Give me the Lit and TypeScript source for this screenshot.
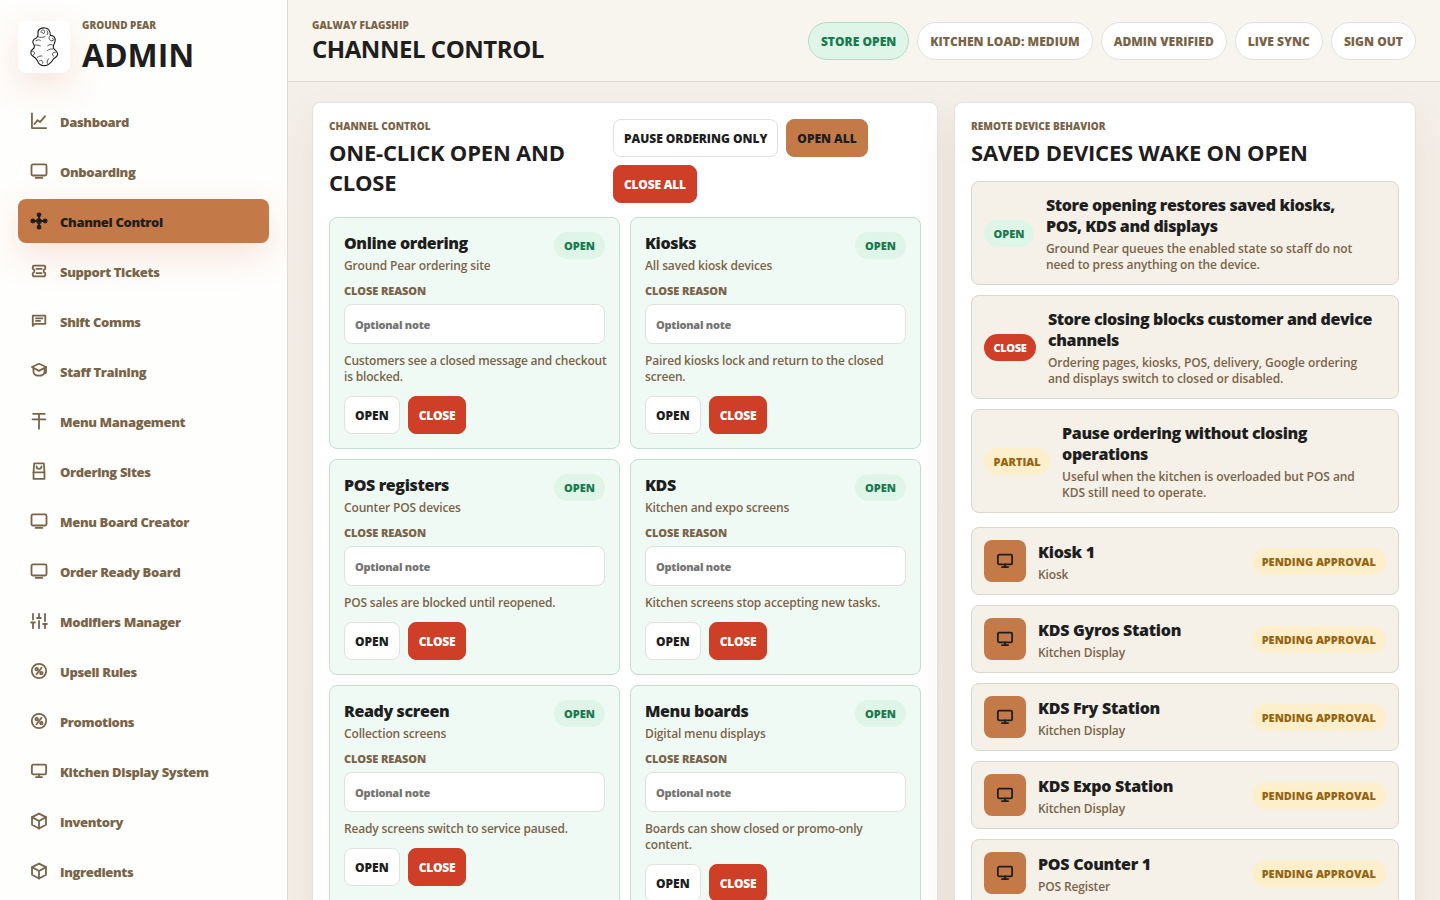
import { LitElement, html, css, svg } from "lit";
import { customElement, property } from "lit/decorators.js";

const ICONS: Record<string, unknown> = {
  chart: svg`<path d="M2.6 2v19.4h19"/><path d="M6 16l4.2-5.2 3.2 2.6L20 5.6"/>`,
  tv: svg`<rect x="2" y="3.2" width="20" height="14.8" rx="2"/><path d="M7.5 21.200h9"/>`,
  hub: svg`<g fill="currentColor"><circle cx="12" cy="12" r="2.6"/><circle cx="3.8" cy="12" r="2"/><circle cx="20.2" cy="12" r="2"/><circle cx="12" cy="3.8" r="2"/><circle cx="12" cy="20.2" r="2"/></g><path d="M4 12h16M12 4v16"/>`,
  ticket: svg`<path d="M5.5 4.8h13a1.8 1.8 0 0 1 1.8 1.8v2.6a2.900 2.900 0 0 0 0 5.600v2.6a1.8 1.8 0 0 1-1.8 1.8h-13a1.8 1.8 0 0 1-1.8-1.8v-2.600a2.900 2.900 0 0 0 0-5.600V6.600a1.8 1.8 0 0 1 1.800-1.800z"/><path d="M8.500 9.200h7M8.500 14.800h7"/>`,
  chat: svg`<path d="M3.700 18.500V4.700h16.700v11H6.500z"/><path d="M8 8.600h8.500M8 11.900h5.500"/>`,
  cap: svg`<path d="M12 2.400L2.500 6.600 12 11.800l9.500-5.200z"/><path d="M4.600 8.500v4.200c0 7.400 14.800 7.400 14.800 0V8.500"/><path d="M21.300 6.800v7.400l-1.900 1"/>`,
  menu: svg`<path d="M4.200 2.400h15.600M3.400 9.800h17.200M12 2.400v20"/>`,
  site: svg`<path d="M5.600 1.700h12.800l.9 12v8.800H4.700v-8.800z"/><path d="M4.700 13.800h14.600"/><path d="M8.700 5.800c.3 4.400 6.300 4.400 6.600 0"/>`,
  sliders: svg`<path d="M4 21.500V14M4 10V2.500M12 21.500V12M12 8V2.500M20 21.500V16M20 12V2.500M1.500 14h5M9.500 8h5M17.500 16h5"/>`,
  percent: svg`<circle cx="12" cy="12" r="9.600"/><circle cx="8.900" cy="9.400" r="1.700"/><circle cx="15.100" cy="14.800" r="1.700"/><path d="M15.400 7.600l-6.800 8.800"/>`,
  monitor: svg`<rect x="2.500" y="3.500" width="19" height="13" rx="1.800"/><path d="M12 16.500V20M8 20.200h8"/>`,
  box: svg`<path d="M12 2.200l9.300 4.600v10.300L12 22l-9.300-4.900V6.800z"/><path d="M2.700 6.800L12 12l9.300-5.200M12 12v10"/>`,
};

const NAV: [string, string][] = [
  ["chart", "Dashboard"],
  ["tv", "Onboarding"],
  ["hub", "Channel Control"],
  ["ticket", "Support Tickets"],
  ["chat", "Shift Comms"],
  ["cap", "Staff Training"],
  ["menu", "Menu Management"],
  ["site", "Ordering Sites"],
  ["tv", "Menu Board Creator"],
  ["tv", "Order Ready Board"],
  ["sliders", "Modifiers Manager"],
  ["percent", "Upsell Rules"],
  ["percent", "Promotions"],
  ["monitor", "Kitchen Display System"],
  ["box", "Inventory"],
  ["box", "Ingredients"],
];

const CHANNELS: [string, string, string][] = [
  ["Online ordering", "Ground Pear ordering site", "Customers see a closed message and checkout is blocked."],
  ["Kiosks", "All saved kiosk devices", "Paired kiosks lock and return to the closed screen."],
  ["POS registers", "Counter POS devices", "POS sales are blocked until reopened."],
  ["KDS", "Kitchen and expo screens", "Kitchen screens stop accepting new tasks."],
  ["Ready screen", "Collection screens", "Ready screens switch to service paused."],
  ["Menu boards", "Digital menu displays", "Boards can show closed or promo-only content."],
];

const RULES: [string, string, string, string][] = [
  ["Open", "ok", "Store opening restores saved kiosks, POS,\u00a0KDS and displays", "Ground Pear queues the enabled state so staff do not need to press anything on the device."],
  ["Close", "bad", "Store closing blocks customer and device channels", "Ordering pages, kiosks, POS, delivery, Google ordering and displays switch to closed or disabled."],
  ["Partial", "warn", "Pause ordering without closing operations", "Useful when the kitchen is overloaded but POS and KDS still need to operate."],
];

const DEVICES: [string, string][] = [
  ["Kiosk 1", "Kiosk"],
  ["KDS Gyros Station", "Kitchen Display"],
  ["KDS Fry Station", "Kitchen Display"],
  ["KDS Expo Station", "Kitchen Display"],
  ["POS Counter 1", "POS Register"],
];

@customElement("gp-icon")
class GpIcon extends LitElement {
  @property() name = "tv";
  static styles = css`
    :host { display: block; width: 18px; height: 18px; flex: none; }
    svg { display: block; width: 18px; height: 18px; overflow: visible; fill: none; stroke: currentColor; stroke-width: 2.4; stroke-linecap: round; stroke-linejoin: round; }
  `;
  render() {
    return html`<svg viewBox="0 0 24 24">${ICONS[this.name]}</svg>`;
  }
}

@customElement("app-root")
class AppRoot extends LitElement {
  static styles = css`
    * { box-sizing: border-box; margin: 0; }
    :host {
      display: grid; grid-template-columns: 288px 1fr; height: 900px; overflow: hidden;
      font-family: "Open Sans", "Noto Sans", sans-serif; color: #1e1e1e; background: #f4efe8;
    }
    .side { background: #fefefc; border-right: 1px solid #dedbd3; padding: 21px 18px 0; overflow: hidden; height: 900px; }
    .brand { display: flex; gap: 12px; height: 52px; }
    .logo { width: 52px; height: 52px; border-radius: 8px; background: #fff; box-shadow: 0 12px 36px rgba(207, 90, 40, .17); flex: none; }
    .logo svg { display: block; width: 52px; height: 52px; fill: none; stroke: #1e1e1e; stroke-width: 3.4; stroke-linecap: round; stroke-linejoin: round; }
    .logo .fine { stroke-width: 2.3; }
    .eyebrow { font-size: 10px; line-height: 14px; font-weight: 800; color: #7a6449; text-transform: uppercase; letter-spacing: .02px; white-space: nowrap; }
    .brand .eyebrow { margin-top: -3px; }
    .brand h1 { font-size: 32px; line-height: 43px; font-weight: 700; letter-spacing: -.1px; margin-top: 1px; }
    .nav { display: grid; gap: 6px; margin-top: 26px; }
    .item { height: 44px; border-radius: 8px; padding: 0 12px; display: flex; align-items: center; gap: 12px; font-size: 13px; font-weight: 800; letter-spacing: -.36px; color: #7a6449; white-space: nowrap; }
    .item span { padding-top: 2px; }
    .item.on { background: #c47a48; color: #1e1e1e; box-shadow: 0 12px 36px rgba(207, 90, 40, .17); }

    .main { min-width: 0; height: 900px; display: flex; flex-direction: column; overflow: hidden; }
    .top { height: 82px; flex: none; background: #f8f5ee; border-bottom: 1px solid #dbd8cf; padding: 0 24px; display: flex; justify-content: space-between; }
    .top .eyebrow { margin-top: 18px; }
    .top h1 { font-size: 24px; line-height: 32px; font-weight: 700; letter-spacing: -.46px; margin-top: 1px; white-space: nowrap; }
    .pills { display: flex; gap: 8px; padding-top: 22px; }
    .pill { height: 38px; border-radius: 19px; border: 1px solid #e2e1df; background: #fff; color: #7a6449; padding: 0 12px; font-size: 12px; line-height: 37px; font-weight: 800; letter-spacing: .03px; text-transform: uppercase; white-space: nowrap; }
    .pill.ok { background: #dff5e7; border-color: #b3dcc5; color: #19794f; }

    .cols { display: grid; grid-template-columns: 626px 462px; gap: 16px; padding: 20px 24px 0; height: 1100px; flex: none; background: linear-gradient(#f4efe8, #f3eee6); }
    .panel { background: #fff; border: 1px solid #e2e2e1; border-radius: 8px; padding: 16px; box-shadow: 0 16px 44px rgba(90, 62, 30, .07); }
    .head { display: grid; grid-template-columns: 272px 308px; gap: 12px; height: 84px; margin-bottom: 14px; }
    .panel h2 { font-size: 22px; line-height: 30px; font-weight: 700; letter-spacing: -.2px; margin-top: 4px; }
    .actions { display: flex; flex-wrap: wrap; gap: 8px; align-content: flex-start; }
    .btn { height: 38px; border-radius: 8px; border: 1px solid #e2e1df; background: #fff; color: #1e1e1e; padding: 2px 10px 0; font: inherit; font-size: 12px; line-height: 34px; font-weight: 800; letter-spacing: -.03px; text-transform: uppercase; white-space: nowrap; }
    .btn.main-act { background: #c47a48; border-color: #c47a48; }
    .btn.bad { background: #cf3e26; border-color: #cf3e26; color: #fff; letter-spacing: -.2px; }

    .grid { display: grid; grid-template-columns: 291px 291px; gap: 10px; }
    .card { background: #f0faf5; border: 1px solid #c0dfd0; border-radius: 8px; padding: 14px; display: flex; flex-direction: column; gap: 10px; }
    .card-head { display: flex; justify-content: space-between; height: 42px; }
    .title { font-size: 16px; line-height: 21px; font-weight: 800; letter-spacing: -.38px; padding-top: 1px; }
    .device .title { letter-spacing: -.28px; }
    .sub { font-size: 12px; line-height: 16px; font-weight: 650; color: #7a6449; letter-spacing: -.15px; }
    .title + .sub { margin-top: 4px; }
    .note { margin: -1px -6px 1px 0; letter-spacing: -.18px; }
    .rule .sub { letter-spacing: -.07px; }
    .tag { flex: none; height: 27px; border-radius: 14px; padding: 0 10px; font-size: 11px; line-height: 27px; font-weight: 800; letter-spacing: 0; text-transform: uppercase; white-space: nowrap; }
    .tag.ok { background: #dff5e7; color: #19794f; }
    .tag.bad { background: #cf3e26; color: #fff; letter-spacing: -.35px; }
    .tag.warn { background: #feefcc; color: #966410; }
    .rule .tag { padding: 0 9.5px; }
    .field { display: grid; gap: 6px; }
    .label { font-size: 11px; line-height: 15px; font-weight: 800; color: #7a6449; text-transform: uppercase; letter-spacing: -.11px; margin-top: -1px; }
    .input { width: 100%; height: 40px; border: 1px solid #e0e0de; border-radius: 8px; background: #fff; padding: 0 10px; font: inherit; font-size: 11px; font-weight: 800; letter-spacing: -.25px; outline: none; }
    .input::placeholder { color: #757575; opacity: 1; }

    .stack { display: grid; gap: 10px; margin-top: 14px; }
    .row { background: #f5f0e8; border: 1px solid #dad6cc; border-radius: 8px; padding: 0 12px; display: flex; align-items: center; gap: 12px; }
    .row.rule { height: 104px; }
    .row.device { height: 68px; }
    .row .text { flex: 1; min-width: 0; }
    .row.rule .text { padding-right: 11px; }
    .row .title { padding-top: 2px; }
    .row .title + .sub { margin-top: 4px; }
    .badge { width: 42px; height: 42px; border-radius: 8px; background: #c47a48; display: grid; place-items: center; flex: none; }
  `;

  render() {
    return html`
      <aside class="side">
        <div class="brand">
          <div class="logo">
            <svg viewBox="54 63 156 156">
              <path d="M114 100C112 86 126 82 136 84C148 86 151 95 151 106C160 106 168 113 165 124C163 132 159 136 160 143C162 150 172 152 173 162C173 170 166 173 161 176C155 186 146 196 134 197C124 198 114 192 113 183C109 176 104 172 99 169C91 165 90 153 98 148C104 145 104 140 102 134C96 128 98 119 105 116C112 113 115 108 114 100z"/>
              <path class="fine" d="M123 97c-3-9 11-10 11-2s-7 7-8 2M141 92c4 5 3 9 0 12M113 110c8 3 16 3 22 0M108 122c5-3 9-3 13-1M150 108c-6 6-3 13 6 15M157 115c6 0 6 8 0 7M106 135c7 0 11 1 15 3M143 137c6-4 10-4 14-2M96 154c8-3 11 9 3 12M142 152c6-5 12-6 17-5M166 157c-9-2-12 8-5 12M112 172c5-4 10-5 14-4M119 182c6-4 12 2 9 8M146 176c-4 5-5 10-4 14"/>
            </svg>
          </div>
          <div>
            <div class="eyebrow">Ground Pear</div>
            <h1>ADMIN</h1>
          </div>
        </div>
        <nav class="nav">
          ${NAV.map(([icon, label]) => html`<div class="item ${label === "Channel Control" ? "on" : ""}"><gp-icon name=${icon}></gp-icon><span>${label}</span></div>`)}
        </nav>
      </aside>
      <main class="main">
        <header class="top">
          <div>
            <div class="eyebrow">Galway Flagship</div>
            <h1>CHANNEL CONTROL</h1>
          </div>
          <div class="pills">
            <div class="pill ok">Store open</div>
            <div class="pill">Kitchen load: medium</div>
            <div class="pill">Admin verified</div>
            <div class="pill">Live sync</div>
            <div class="pill">Sign out</div>
          </div>
        </header>
        <div class="cols">
          <section class="panel">
            <div class="head">
              <div>
                <div class="eyebrow">Channel control</div>
                <h2>ONE-CLICK OPEN AND CLOSE</h2>
              </div>
              <div class="actions">
                <button class="btn">Pause ordering only</button>
                <button class="btn main-act">Open all</button>
                <button class="btn bad">Close all</button>
              </div>
            </div>
            <div class="grid">
              ${CHANNELS.map(([title, sub, note]) => html`
                <article class="card">
                  <div class="card-head">
                    <div><div class="title">${title}</div><div class="sub">${sub}</div></div>
                    <span class="tag ok">Open</span>
                  </div>
                  <div class="field"><span class="label">Close reason</span><input class="input" placeholder="Optional note"></div>
                  <p class="sub note">${note}</p>
                  <div class="actions"><button class="btn">Open</button><button class="btn bad">Close</button></div>
                </article>`)}
            </div>
          </section>
          <section class="panel">
            <div class="eyebrow">Remote device behavior</div>
            <h2>SAVED DEVICES WAKE ON OPEN</h2>
            <div class="stack">
              ${RULES.map(([tag, tone, title, sub]) => html`
                <div class="row rule"><span class="tag ${tone}">${tag}</span><div class="text"><div class="title">${title}</div><div class="sub">${sub}</div></div></div>`)}
            </div>
            <div class="stack">
              ${DEVICES.map(([title, sub]) => html`
                <div class="row device"><div class="badge"><gp-icon name="monitor"></gp-icon></div><div class="text"><div class="title">${title}</div><div class="sub">${sub}</div></div><span class="tag warn">Pending approval</span></div>`)}
            </div>
          </section>
        </div>
      </main>`;
  }
}
